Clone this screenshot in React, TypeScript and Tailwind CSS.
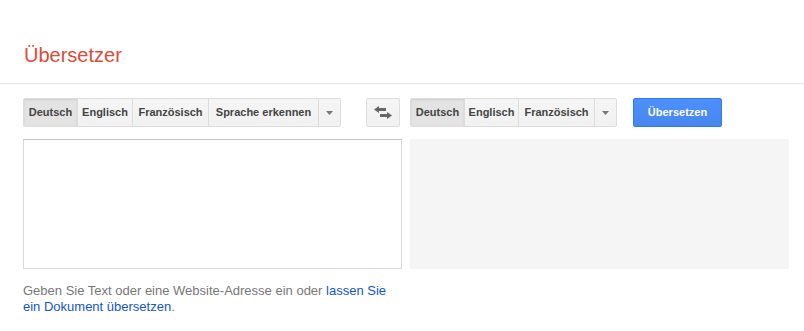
import React from "react";

const font = { fontFamily: '"Liberation Sans", Arial, sans-serif' };

function Seg({ label, w, selected, first }: { label: string; w: string; selected?: boolean; first?: boolean }) {
  return (
    <div
      className={`${w} h-full flex items-center justify-center text-[11px] font-bold text-[#444] ${first ? "" : "border-l border-[#dcdcdc]"} ${
        selected ? "bg-[#e3e3e3] shadow-[inset_0_1px_2px_rgba(0,0,0,0.1)]" : "bg-gradient-to-b from-[#f5f5f5] to-[#f1f1f1]"
      }`}
    >
      {label}
    </div>
  );
}

function Arrow() {
  return (
    <div className="w-[22px] h-full flex items-center justify-center border-l border-[#dcdcdc] bg-gradient-to-b from-[#f5f5f5] to-[#f1f1f1]">
      <svg width="7" height="4" viewBox="0 0 7 4">
        <polygon points="0,0 7,0 3.5,4" fill="#777" />
      </svg>
    </div>
  );
}

export default function App() {
  return (
    <div className="w-[804px] h-[331px] bg-white overflow-hidden" style={font}>
      <div className="border-b border-[#e5e5e5] pt-[43px] pb-[16px] pl-[24px]">
        <div className="text-[20px] leading-[24px] text-[#dd4b39]">Übersetzer</div>
      </div>
      <div className="pl-[23px]">
        <div className="mt-[14px] flex items-center h-[29px]">
          <div className="flex h-full border border-[#dcdcdc] rounded-[2px] overflow-hidden">
            <Seg label="Deutsch" w="w-[53px]" selected first />
            <Seg label="Englisch" w="w-[55px]" />
            <Seg label="Französisch" w="w-[76px]" />
            <Seg label="Sprache erkennen" w="w-[110px]" />
            <Arrow />
          </div>
          <div className="ml-[25px] w-[34px] h-full border border-[#dcdcdc] rounded-[2px] bg-gradient-to-b from-[#f5f5f5] to-[#f1f1f1] flex items-center justify-center">
            <svg width="18" height="13" viewBox="0 0 18 13">
              <polygon points="0,3.5 5,0 5,7" fill="#666" />
              <rect x="5" y="2" width="7" height="3" fill="#666" />
              <polygon points="18,9.5 13,6 13,13" fill="#666" />
              <rect x="6" y="8" width="7" height="3" fill="#666" />
            </svg>
          </div>
          <div className="ml-[10px] flex h-full border border-[#dcdcdc] rounded-[2px] overflow-hidden">
            <Seg label="Deutsch" w="w-[53px]" selected first />
            <Seg label="Englisch" w="w-[54px]" />
            <Seg label="Französisch" w="w-[76px]" />
            <Arrow />
          </div>
          <div className="ml-[16px] w-[89px] h-full rounded-[2px] border border-[#3079ed] bg-gradient-to-b from-[#4d90fe] to-[#4787ed] text-white text-[11px] font-bold flex items-center justify-center">
            Übersetzen
          </div>
        </div>
        <div className="mt-[12px] flex gap-[8px]">
          <div className="w-[379px] h-[130px] border border-[#d9d9d9] border-t-[#c0c0c0] bg-white" />
          <div className="w-[379px] h-[130px] bg-[#f5f5f5]" />
        </div>
        <div className="mt-[14px] w-[379px] text-[13px] leading-[16px] text-[#777]">
          Geben Sie Text oder eine Website-Adresse ein oder{" "}
          <span className="text-[#1155cc]">lassen Sie</span>{" "}
          <span className="text-[#1155cc]">ein Dokument übersetzen</span>.
        </div>
      </div>
    </div>
  );
}
